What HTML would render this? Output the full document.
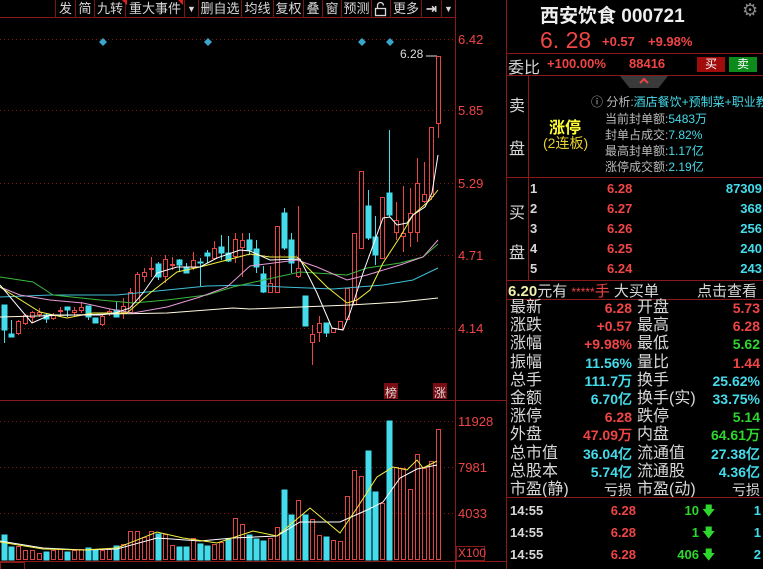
<!DOCTYPE html>
<html><head><meta charset="utf-8"><style>
*{margin:0;padding:0;box-sizing:border-box}
body{width:763px;height:569px;background:#000;overflow:hidden;position:relative;font-family:"Liberation Sans","Noto Sans CJK SC",sans-serif;color:#c8c8c8}
.a{position:absolute;white-space:nowrap}
.tb{position:absolute;top:0;height:18px;font-size:13px;line-height:18px;color:#d8d8d8;text-align:center;border-left:1px solid #7a1515}
.r{color:#f04545}.c{color:#44dceb}.g{color:#2ed62e}.w{color:#d8d8d8}.y{color:#ffff33}
.hl{position:absolute;left:507px;width:256px;height:1px;background:#8a1a1a}
.st{position:absolute;font-size:16px;line-height:18px}
.v{position:absolute;font-size:14px;font-weight:bold;text-align:right;line-height:18px;font-family:"Liberation Sans",sans-serif}
</style></head><body>
<svg class="a" style="left:0;top:0" width="507" height="569" viewBox="0 0 507 569">
<g stroke="#8a1a1a" stroke-width="1">
<line x1="0" y1="17.5" x2="455" y2="17.5"/>
<line x1="455.5" y1="0" x2="455.5" y2="569"/>
<line x1="0" y1="400.5" x2="507" y2="400.5"/>
<line x1="0" y1="561.5" x2="507" y2="561.5"/>
<line x1="506.5" y1="0" x2="506.5" y2="569"/>
</g>
<g stroke="#7a1818" stroke-dasharray="1,3">
<line x1="0" y1="39.5" x2="455" y2="39.5"/><line x1="0" y1="110.5" x2="455" y2="110.5"/><line x1="0" y1="183.5" x2="455" y2="183.5"/><line x1="0" y1="255.5" x2="455" y2="255.5"/><line x1="0" y1="328.5" x2="455" y2="328.5"/>
<line x1="0" y1="421.5" x2="455" y2="421.5"/><line x1="0" y1="467.5" x2="455" y2="467.5"/><line x1="0" y1="513.5" x2="455" y2="513.5"/>
</g>
<g fill="#3aa6cc"><path d="M103 38l4 4-4 4-4-4z"/><path d="M208 38l4 4-4 4-4-4z"/><path d="M362 38l4 4-4 4-4-4z"/><path d="M390 38l4 4-4 4-4-4z"/></g>
<line x1="426" y1="56" x2="437" y2="56" stroke="#ddd"/>
<g stroke="#44dceb" fill="#44dceb">
<line x1="4.5" y1="305" x2="4.5" y2="343"/><rect x="2" y="305" width="5" height="25"/>
<line x1="11.5" y1="320" x2="11.5" y2="337"/><rect x="9" y="334" width="5" height="3"/>
<line x1="46.5" y1="313" x2="46.5" y2="323"/><rect x="44" y="315" width="5" height="4"/>
<line x1="67.5" y1="307" x2="67.5" y2="317"/><rect x="65" y="307" width="5" height="3"/>
<line x1="88.5" y1="306" x2="88.5" y2="320"/><rect x="86" y="306" width="5" height="11"/>
<rect x="93" y="318" width="5" height="5"/>
<line x1="116.5" y1="302" x2="116.5" y2="317"/><rect x="114" y="310" width="5" height="7"/>
<line x1="158.5" y1="262" x2="158.5" y2="280"/><rect x="156" y="264" width="5" height="13"/>
<line x1="179.5" y1="259" x2="179.5" y2="271"/><rect x="177" y="260" width="5" height="5"/>
<line x1="186.5" y1="263" x2="186.5" y2="273"/><rect x="184" y="268" width="5" height="5"/>
<line x1="200.5" y1="258" x2="200.5" y2="286"/><rect x="198" y="262" width="5" height="1"/>
<line x1="207.5" y1="250" x2="207.5" y2="263"/><rect x="205" y="253" width="5" height="3"/>
<line x1="221.5" y1="235" x2="221.5" y2="260"/><rect x="219" y="247" width="5" height="6"/>
<line x1="228.5" y1="236" x2="228.5" y2="262"/><rect x="226" y="253" width="5" height="8"/>
<line x1="249.5" y1="233" x2="249.5" y2="255"/><rect x="247" y="240" width="5" height="10"/>
<line x1="256.5" y1="240" x2="256.5" y2="273"/><rect x="254" y="249" width="5" height="18"/>
<line x1="263.5" y1="266" x2="263.5" y2="293"/><rect x="261" y="274" width="5" height="18"/>
<line x1="284.5" y1="208" x2="284.5" y2="250"/><rect x="282" y="213" width="5" height="35"/>
<line x1="291.5" y1="233" x2="291.5" y2="273"/><rect x="289" y="240" width="5" height="23"/>
<rect x="303" y="296" width="5" height="30"/>
<line x1="326.5" y1="323" x2="326.5" y2="337"/><rect x="324" y="323" width="5" height="10"/>
<line x1="368.5" y1="190" x2="368.5" y2="240"/><rect x="366" y="206" width="5" height="32"/>
<line x1="375.5" y1="216" x2="375.5" y2="265"/><rect x="373" y="237" width="5" height="18"/>
<line x1="389.5" y1="130" x2="389.5" y2="217"/><rect x="387" y="193" width="5" height="22"/>
</g>
<g stroke="#e84545" fill="#000">
<line x1="18.5" y1="320" x2="18.5" y2="335"/><rect x="16.5" y="321.5" width="4" height="12"/>
<line x1="25.5" y1="314" x2="25.5" y2="325"/><rect x="23.5" y="315.5" width="4" height="8"/>
<line x1="32.5" y1="311" x2="32.5" y2="323"/><rect x="30.5" y="312.5" width="4" height="5"/>
<line x1="39.5" y1="308" x2="39.5" y2="317"/><rect x="37.5" y="312.5" width="4" height="2"/>
<line x1="53.5" y1="313" x2="53.5" y2="320"/><rect x="51.5" y="315.5" width="4" height="3"/>
<line x1="60.5" y1="307" x2="60.5" y2="317"/><rect x="58.5" y="310.5" width="4" height="1"/>
<line x1="74.5" y1="307" x2="74.5" y2="317"/><rect x="72.5" y="310.5" width="4" height="2"/>
<line x1="81.5" y1="302" x2="81.5" y2="313"/><rect x="79.5" y="307.5" width="4" height="3"/>
<line x1="102.5" y1="315" x2="102.5" y2="326"/><rect x="100.5" y="316.5" width="4" height="8"/>
<line x1="109.5" y1="309" x2="109.5" y2="316"/><rect x="107.5" y="311.5" width="4" height="2"/>
<line x1="123.5" y1="298" x2="123.5" y2="319"/><rect x="121.5" y="306.5" width="4" height="6"/>
<line x1="130.5" y1="288" x2="130.5" y2="313"/><rect x="128.5" y="292.5" width="4" height="20"/>
<line x1="137.5" y1="272" x2="137.5" y2="303"/><rect x="135.5" y="274.5" width="4" height="28"/>
<line x1="144.5" y1="268" x2="144.5" y2="282"/><rect x="142.5" y="272.5" width="4" height="4"/>
<line x1="151.5" y1="257" x2="151.5" y2="277"/><rect x="149.5" y="268.5" width="4" height="1"/>
<line x1="165.5" y1="255" x2="165.5" y2="283"/><rect x="163.5" y="259.5" width="4" height="17"/>
<line x1="172.5" y1="257" x2="172.5" y2="270"/><rect x="170.5" y="264.5" width="4" height="1"/>
<line x1="193.5" y1="252" x2="193.5" y2="270"/><rect x="191.5" y="260.5" width="4" height="7"/>
<line x1="214.5" y1="241" x2="214.5" y2="260"/><rect x="212.5" y="248.5" width="4" height="10"/>
<line x1="235.5" y1="233" x2="235.5" y2="263"/><rect x="233.5" y="239.5" width="4" height="17"/>
<line x1="242.5" y1="233" x2="242.5" y2="277"/><rect x="240.5" y="240.5" width="4" height="7"/>
<rect x="268.5" y="283.5" width="4" height="9"/><line x1="270.5" y1="266" x2="270.5" y2="283"/>
<rect x="275.5" y="226.5" width="4" height="66"/>
<line x1="298.5" y1="206" x2="298.5" y2="278"/><rect x="296.5" y="268.5" width="4" height="8"/>
<line x1="312.5" y1="325" x2="312.5" y2="365"/><rect x="310.5" y="334.5" width="4" height="8"/>
<line x1="319.5" y1="316" x2="319.5" y2="342"/><rect x="317.5" y="323.5" width="4" height="9"/>
<rect x="331.5" y="328.5" width="4" height="4"/>
<rect x="338.5" y="321.5" width="4" height="8"/>
<rect x="345.5" y="288.5" width="4" height="31"/>
<rect x="352.5" y="233.5" width="4" height="71"/>
<rect x="359.5" y="171.5" width="4" height="77"/>
<rect x="380.5" y="197.5" width="4" height="61"/>
<line x1="396.5" y1="202" x2="396.5" y2="240"/><rect x="394.5" y="220.5" width="4" height="12"/>
<line x1="403.5" y1="186" x2="403.5" y2="252"/><rect x="401.5" y="233.5" width="4" height="3"/>
<line x1="410.5" y1="188" x2="410.5" y2="247"/><rect x="408.5" y="213.5" width="4" height="19"/>
<line x1="417.5" y1="158" x2="417.5" y2="242"/><rect x="415.5" y="183.5" width="4" height="49"/>
<line x1="424.5" y1="162" x2="424.5" y2="203"/><rect x="422.5" y="194.5" width="4" height="7"/>
<line x1="431.5" y1="127" x2="431.5" y2="200"/><rect x="429.5" y="127.5" width="4" height="69"/>
<line x1="438.5" y1="124" x2="438.5" y2="138"/><rect x="436.5" y="56.5" width="4" height="67"/>
</g>
<g fill="none" stroke-width="1">
<polyline stroke="#fffbe0" points="0,317 110,314 167,313 233,308 250,309 350,305 400,302 438,298"/>
<polyline stroke="#40c0d8" points="0,297 50,295 117,295 167,290 207,286 250,285 283,287 333,289 383,285 413,280 438,268"/>
<polyline stroke="#3cb83c" points="0,277 33,282 53,295 100,300 133,303 167,300 207,295 233,287 250,283 300,272 347,275 367,268 400,263 423,257 438,244"/>
<polyline stroke="#e79ad8" points="0,287 20,295 50,300 83,303 110,309 133,313 167,307 200,297 227,287 250,266 297,260 317,267 347,280 367,275 400,265 423,257 438,240"/>
<polyline stroke="#f0f040" points="0,287 40,312 67,318 93,313 127,313 150,293 177,272 200,267 227,260 250,254 270,257 297,257 327,287 347,303 357,300 370,290 383,263 400,237 413,215 430,200 438,190"/>
<polyline stroke="#ffffff" points="0,285 32,323 50,315 100,315 115,313 130,308 143,293 157,273 177,267 200,267 217,258 240,250 250,251 270,260 300,259 317,293 332,328 343,330 350,313 363,273 383,218 390,217 397,225 407,223 413,215 425,207 432,193 438,155"/>
</g>
<g stroke="#44dceb" fill="#44dceb">
<rect x="2" y="535" width="5" height="25"/><rect x="9" y="547" width="5" height="13"/><rect x="44" y="552" width="5" height="8"/><rect x="65" y="552" width="5" height="8"/><rect x="86" y="548" width="5" height="12"/><rect x="93" y="550" width="5" height="10"/><rect x="114" y="546" width="5" height="14"/><rect x="156" y="534" width="5" height="26"/><rect x="177" y="547" width="5" height="13"/><rect x="184" y="547" width="5" height="13"/><rect x="198" y="544" width="5" height="16"/><rect x="205" y="546" width="5" height="14"/><rect x="226" y="539" width="5" height="21"/><rect x="247" y="535" width="5" height="25"/><rect x="254" y="539" width="5" height="21"/><rect x="261" y="541" width="5" height="19"/><rect x="282" y="490" width="5" height="70"/><rect x="289" y="515" width="5" height="45"/><rect x="303" y="515" width="5" height="45"/><rect x="324" y="537" width="5" height="23"/><rect x="366" y="451" width="5" height="109"/><rect x="373" y="492" width="5" height="68"/><rect x="387" y="421" width="5" height="139"/>
</g>
<g stroke="#e04545" fill="none">
<rect x="16.5" y="546.5" width="4" height="13"/><rect x="23.5" y="550.5" width="4" height="9"/><rect x="30.5" y="550.5" width="4" height="9"/><rect x="37.5" y="553.5" width="4" height="6"/><rect x="51.5" y="550.5" width="4" height="9"/><rect x="58.5" y="549.5" width="4" height="10"/><rect x="72.5" y="550.5" width="4" height="9"/><rect x="79.5" y="549.5" width="4" height="10"/><rect x="100.5" y="550.5" width="4" height="9"/><rect x="107.5" y="549.5" width="4" height="10"/><rect x="121.5" y="544.5" width="4" height="15"/><rect x="128.5" y="531.5" width="4" height="28"/><rect x="135.5" y="531.5" width="4" height="28"/><rect x="142.5" y="537.5" width="4" height="22"/><rect x="149.5" y="531.5" width="4" height="28"/><rect x="163.5" y="534.5" width="4" height="25"/><rect x="170.5" y="545.5" width="4" height="14"/><rect x="191.5" y="538.5" width="4" height="21"/><rect x="212.5" y="544.5" width="4" height="15"/><rect x="219.5" y="542.5" width="4" height="17"/><rect x="233.5" y="518.5" width="4" height="41"/><rect x="240.5" y="524.5" width="4" height="35"/><rect x="268.5" y="538.5" width="4" height="21"/><rect x="275.5" y="527.5" width="4" height="32"/><rect x="296.5" y="500.5" width="4" height="59"/><rect x="310.5" y="519.5" width="4" height="40"/><rect x="317.5" y="535.5" width="4" height="24"/><rect x="331.5" y="540.5" width="4" height="19"/><rect x="338.5" y="541.5" width="4" height="18"/><rect x="345.5" y="496.5" width="4" height="63"/><rect x="352.5" y="470.5" width="4" height="89"/><rect x="359.5" y="476.5" width="4" height="83"/><rect x="380.5" y="503.5" width="4" height="56"/><rect x="394.5" y="467.5" width="4" height="92"/><rect x="401.5" y="468.5" width="4" height="91"/><rect x="408.5" y="489.5" width="4" height="70"/><rect x="415.5" y="454.5" width="4" height="105"/><rect x="422.5" y="468.5" width="4" height="91"/><rect x="429.5" y="461.5" width="4" height="98"/><rect x="436.5" y="429.5" width="4" height="130"/>
</g>
<g fill="none">
<polyline stroke="#ffffff" points="0,541 43,548 83,550 117,549 157,538 200,541 233,538 277,536 300,522 340,522 367,510 383,502 400,478 417,469 437,465"/>
<polyline stroke="#f0f040" points="0,542 43,549 83,550 117,548 157,532 183,538 217,543 253,531 277,536 310,508 340,533 357,508 377,477 393,467 407,470 417,460 423,468 437,461"/>
</g>
<rect x="456.5" y="546.5" width="28" height="14" fill="none" stroke="#8a1a1a"/>
<rect x="0.5" y="562.5" width="24" height="8" fill="none" stroke="#8a1a1a"/>
<rect x="384" y="383" width="14" height="16" fill="#7a0c14"/><rect x="433" y="383" width="14" height="16" fill="#7a0c14"/>
<g fill="none" stroke="#d8d8d8" stroke-width="1.3"><rect x="375.5" y="8.5" width="10" height="7"/><path d="M377.5 8.5v-3a3 3 0 0 1 6 0"/></g>
</svg>
<div class="tb" style="left:55px;width:20px">发</div>
<div class="tb" style="left:75px;width:19px">简</div>
<div class="tb" style="left:94px;width:31px">九转</div>
<div class="tb" style="left:125px;width:59px">重大事件</div>
<div class="tb" style="left:184px;width:14px;font-size:9px">▼</div>
<div class="tb" style="left:198px;width:43px">删自选</div>
<div class="tb" style="left:241px;width:32px">均线</div>
<div class="tb" style="left:273px;width:30px">复权</div>
<div class="tb" style="left:303px;width:19px">叠</div>
<div class="tb" style="left:322px;width:19px">窗</div>
<div class="tb" style="left:341px;width:30px">预测</div>
<div class="tb" style="left:371px;width:19px"></div>
<div class="tb" style="left:390px;width:31px">更多</div>
<div class="tb" style="left:421px;width:20px;font-weight:bold">⇥</div>
<div class="tb" style="left:441px;width:14px;font-size:9px">▼</div>
<div class="a" style="left:122px;top:0;border-top:5px solid #e02020;border-left:5px solid transparent"></div>
<div class="a" style="left:178px;top:0;border-top:5px solid #e02020;border-left:5px solid transparent"></div>
<div class="a" style="left:400px;top:47px;font-size:12px;color:#ddd">6.28</div>
<div class="a r" style="left:458px;top:32px;font-size:13px">6.42</div>
<div class="a r" style="left:458px;top:103px;font-size:13px">5.85</div>
<div class="a r" style="left:458px;top:176px;font-size:13px">5.29</div>
<div class="a r" style="left:458px;top:248px;font-size:13px">4.71</div>
<div class="a r" style="left:458px;top:321px;font-size:13px">4.14</div>
<div class="a r" style="left:458px;top:414px;font-size:13px">11928</div>
<div class="a r" style="left:458px;top:460px;font-size:13px">7981</div>
<div class="a r" style="left:458px;top:506px;font-size:13px">4033</div>
<div class="a r" style="left:458px;top:546px;font-size:12px">X100</div>
<div class="a w" style="left:384px;top:384px;font-size:12px;width:14px;text-align:center">榜</div>
<div class="a w" style="left:433px;top:384px;font-size:12px;width:14px;text-align:center">涨</div>

<div class="a w" style="left:540px;top:1px;font-size:19px;font-weight:bold;color:#eee">西安饮食 000721</div>
<div class="a" style="left:742px;top:0;font-size:18px;color:#888">⚙</div>
<div class="a r" style="left:540px;top:27px;font-size:23px">6. 28</div>
<div class="a r" style="left:602px;top:34px;font-size:13px;font-weight:bold">+0.57</div>
<div class="a r" style="left:648px;top:34px;font-size:13px;font-weight:bold">+9.98%</div>
<div class="hl" style="top:53px"></div>
<div class="a w" style="left:508px;top:54px;font-size:16px">委比</div>
<div class="a r" style="left:547px;top:56px;font-size:13px;font-weight:bold">+100.00%</div>
<div class="a r" style="left:629px;top:56px;font-size:13px;font-weight:bold">88416</div>
<div class="a" style="left:697px;top:57px;width:28px;height:15px;background:#a00c0c;color:#fff;font-size:12px;text-align:center;line-height:15px">买</div>
<div class="a" style="left:729px;top:57px;width:28px;height:15px;background:#0c8a1c;color:#fff;font-size:12px;text-align:center;line-height:15px">卖</div>
<div class="hl" style="top:75px"></div>
<div class="a" style="left:620px;top:76px;width:48px;height:12px;background:#3a3a3a;clip-path:polygon(0 0,100% 0,80% 100%,20% 100%)"></div>
<svg class="a" style="left:637px;top:77px" width="14" height="8"><path d="M3 6l4-4 4 4" stroke="#e84545" stroke-width="2" fill="none"/></svg>
<div class="a" style="left:528px;top:75px;width:1px;height:205px;background:#8a1a1a"></div>
<div class="a w" style="left:509px;top:92px;font-size:16px">卖</div>
<div class="a w" style="left:509px;top:135px;font-size:16px">盘</div>
<div class="a y" style="left:549px;top:114px;font-size:16px;font-weight:bold">涨停</div>
<div class="a" style="left:543px;top:133px;font-size:14px;color:#e6d030">(2连板)</div>
<div class="a" style="left:591px;top:93px;font-size:12px;color:#bbb">ⓘ 分析:<span class="c">酒店餐饮+预制菜+职业教</span></div>
<div class="a" style="left:605px;top:110px;font-size:12px;color:#bbb">当前封单额:<span class="c">5483万</span></div>
<div class="a" style="left:605px;top:126px;font-size:12px;color:#bbb">封单占成交:<span class="c">7.82%</span></div>
<div class="a" style="left:605px;top:142px;font-size:12px;color:#bbb">最高封单额:<span class="c">1.17亿</span></div>
<div class="a" style="left:605px;top:158px;font-size:12px;color:#bbb">涨停成交额:<span class="c">2.19亿</span></div>
<div class="hl" style="top:177px"></div>
<div class="a w" style="left:509px;top:199px;font-size:16px">买</div>
<div class="a w" style="left:509px;top:239px;font-size:16px">盘</div>
<div class="a w" style="left:530px;top:179px;font-size:13px;line-height:20px;font-weight:bold">1<br>2<br>3<br>4<br>5</div>
<div class="a r" style="left:607px;top:179px;font-size:13px;line-height:20px;font-weight:bold">6.28<br>6.27<br>6.26<br>6.25<br>6.24</div>
<div class="a c" style="right:1px;top:179px;font-size:13px;line-height:20px;font-weight:bold;text-align:right">87309<br>368<br>256<br>240<br>243</div>
<div class="hl" style="top:280px"></div>
<div class="a w" style="left:508px;top:280px;font-size:15px"><b style="color:#f0f0b0">6.20</b>元有 <span class="r" style="font-size:12px">*****</span><span class="r">手</span> 大买单</div>
<div class="a w" style="left:697px;top:280px;font-size:15px">点击查看</div>
<div class="hl" style="top:299px"></div>
<div class="st w" style="left:510px;top:299px;line-height:18.2px">最新<br>涨跌<br>涨幅<br>振幅<br>总手<br>金额<br>涨停<br>外盘<br>总市值<br>总股本<br>市盈(静)</div>
<div class="st w" style="left:637px;top:299px;line-height:18.2px">开盘<br>最高<br>最低<br>量比<br>换手<br>换手(实)<br>跌停<br>内盘<br>流通值<br>流通股<br>市盈(动)</div>
<div class="v" style="right:131px;top:299px;line-height:18.2px"><span class="r">6.28</span><br><span class="r">+0.57</span><br><span class="r">+9.98%</span><br><span class="c">11.56%</span><br><span class="c">111.7万</span><br><span class="c">6.70亿</span><br><span class="r">6.28</span><br><span class="r">47.09万</span><br><span class="c">36.04亿</span><br><span class="c">5.74亿</span><br><span class="w" style="font-weight:normal">亏损</span></div>
<div class="v" style="right:3px;top:299px;line-height:18.2px"><span class="r">5.73</span><br><span class="r">6.28</span><br><span class="g">5.62</span><br><span class="r">1.44</span><br><span class="c">25.62%</span><br><span class="c">33.75%</span><br><span class="g">5.14</span><br><span class="g">64.61万</span><br><span class="c">27.38亿</span><br><span class="c">4.36亿</span><br><span class="w" style="font-weight:normal">亏损</span></div>
<div class="hl" style="top:497px"></div>
<div class="a w" style="left:510px;top:500px;font-size:13px;line-height:22px;font-weight:bold">14:55<br>14:55<br>14:55</div>
<div class="v r" style="right:127px;top:500px;font-size:13px;line-height:22px">6.28<br>6.28<br>6.28</div>
<div class="v g" style="right:64px;top:500px;font-size:13px;line-height:22px">10<br>1<br>406</div>
<div class="a g" style="left:702px;top:500px;font-size:13px;line-height:22px">🡇<br>🡇<br>🡇</div>
<div class="v c" style="right:2px;top:500px;font-size:13px;line-height:22px">1<br>1<br>2</div>
</body></html>
